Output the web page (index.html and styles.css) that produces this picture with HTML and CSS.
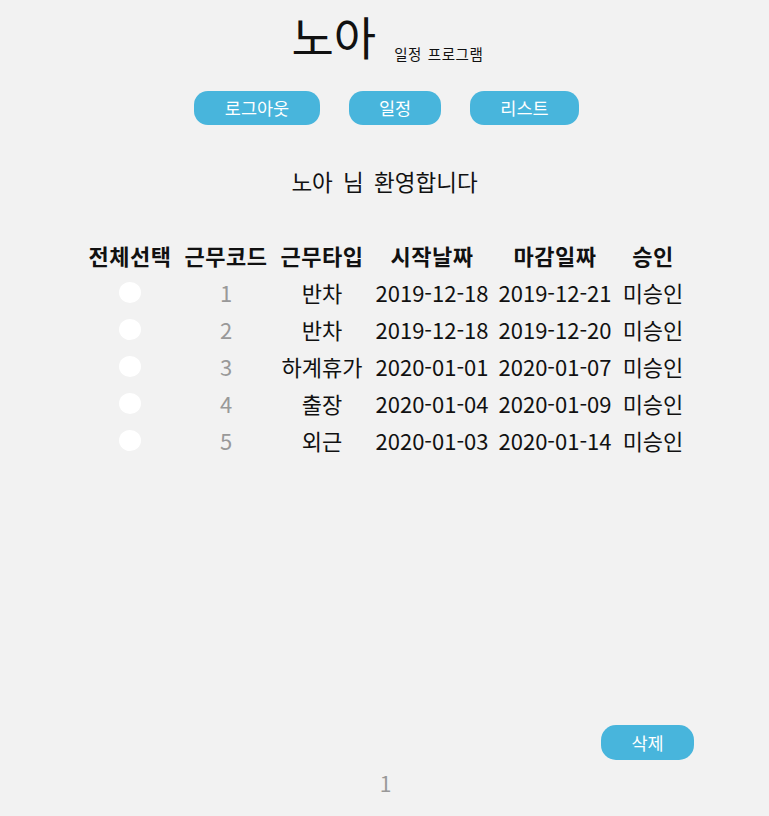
FILE: index.html
```html
<!DOCTYPE html>
<html lang="ko">
<head>
<meta charset="utf-8">
<title>노아 일정 프로그램</title>
<link rel="stylesheet" href="styles.css">
</head>
<body>
<div class="page">
  <header class="brand">
    <h1 class="brand-title">노아</h1>
    <span class="brand-sub">일정 프로그램</span>
  </header>
  <nav class="nav">
    <button class="btn btn-logout">로그아웃</button>
    <button class="btn btn-schedule">일정</button>
    <button class="btn btn-list">리스트</button>
  </nav>
  <p class="welcome">노아 님 환영합니다</p>
  <table class="grid">
    <colgroup>
      <col class="c1"><col class="c2"><col class="c3"><col class="c4"><col class="c5"><col class="c6">
    </colgroup>
    <thead>
      <tr><th>전체선택</th><th>근무코드</th><th>근무타입</th><th>시작날짜</th><th>마감일짜</th><th>승인</th></tr>
    </thead>
    <tbody>
      <tr><td><span class="dot"></span></td><td class="num">1</td><td>반차</td><td>2019-12-18</td><td>2019-12-21</td><td>미승인</td></tr>
      <tr><td><span class="dot"></span></td><td class="num">2</td><td>반차</td><td>2019-12-18</td><td>2019-12-20</td><td>미승인</td></tr>
      <tr><td><span class="dot"></span></td><td class="num">3</td><td>하계휴가</td><td>2020-01-01</td><td>2020-01-07</td><td>미승인</td></tr>
      <tr><td><span class="dot"></span></td><td class="num">4</td><td>출장</td><td>2020-01-04</td><td>2020-01-09</td><td>미승인</td></tr>
      <tr><td><span class="dot"></span></td><td class="num">5</td><td>외근</td><td>2020-01-03</td><td>2020-01-14</td><td>미승인</td></tr>
    </tbody>
  </table>
  <div class="spacer"></div>
  <div class="actions">
    <button class="btn btn-delete">삭제</button>
  </div>
  <div class="pager">1</div>
</div>
</body>
</html>
```
FILE: styles.css
```css
html, body {
  margin: 0;
  padding: 0;
  background: #f2f2f2;
}
body {
  font-family: "Noto Sans CJK KR", "Noto Sans", sans-serif;
  color: #111;
}
.page {
  width: 769px;
  height: 816px;
  display: flex;
  flex-direction: column;
  align-items: center;
}
.brand {
  display: flex;
  align-items: flex-end;
  margin-top: 3px;
  margin-left: 6px;
  height: 62px;
}
.brand-title {
  margin: 0;
  font-size: 46px;
  font-weight: 400;
  line-height: 60px;
}
.brand-sub {
  font-size: 14.5px;
  line-height: 18px;
  margin-left: 18px;
  margin-bottom: 2px;
  letter-spacing: 0.6px;
  word-spacing: 1px;
}
.nav {
  display: flex;
  gap: 29px;
  margin-top: 26px;
  margin-left: 4px;
}
.btn {
  border: none;
  background: #48b5dc;
  color: #fff;
  font-family: inherit;
  font-size: 17.5px;
  height: 34px;
  border-radius: 14px;
  padding: 0;
  line-height: 34px;
}
.btn-logout { width: 126px; }
.btn-schedule { width: 92px; }
.btn-list { width: 109px; }
.welcome {
  margin: 33px 0 0 0;
  font-size: 22.5px;
  line-height: 46px;
  word-spacing: 4px;
}
.grid {
  margin-top: 33px;
  border-collapse: collapse;
  table-layout: fixed;
  width: 608px;
  margin-left: 3px;
}
.c1 { width: 96px; }
.c2 { width: 96px; }
.c3 { width: 96px; }
.c4 { width: 124px; }
.c5 { width: 122px; }
.c6 { width: 74px; }
.grid th, .grid td {
  padding: 0;
  text-align: center;
  white-space: nowrap;
}
.grid th {
  font-size: 22px;
  font-weight: 700;
  height: 36px;
  letter-spacing: 0.5px;
}
.grid td {
  font-size: 22px;
  height: 37px;
}
.grid td.num {
  color: #999;
}
.dot {
  display: inline-block;
  width: 22px;
  height: 21px;
  border-radius: 50%;
  background: #fff;
  vertical-align: middle;
  margin-top: -6px;
}
.spacer {
  flex: 1;
}
.actions {
  align-self: stretch;
  display: flex;
  justify-content: flex-end;
  padding-right: 75px;
}
.btn-delete {
  width: 93px;
  height: 35px;
  line-height: 35px;
  border-radius: 15px;
}
.pager {
  color: #999;
  font-size: 21px;
  line-height: 30px;
  margin-top: 8px;
  margin-bottom: 18px;
  margin-left: 2px;
}
```
